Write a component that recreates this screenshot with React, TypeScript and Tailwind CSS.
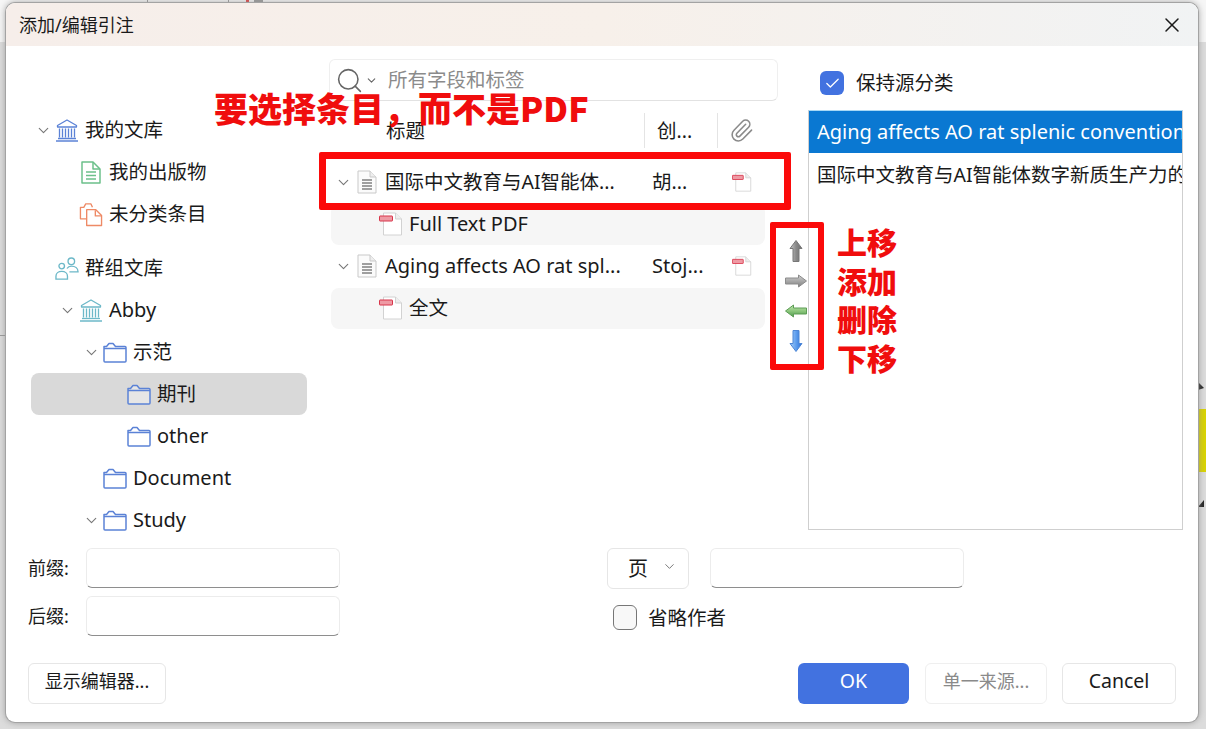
import { ChevronDown, Paperclip, Search, X, Check } from 'lucide-react';

function Caret() {
  return <ChevronDown size={17} strokeWidth={1.6} className="text-[#777]" />;
}

function Folder() {
  return (
    <svg width="24" height="21" viewBox="0 0 24 21" fill="none" stroke="#5b82d6" strokeWidth="1.5" strokeLinejoin="round">
      <path d="M1 4.5V19a1 1 0 0 0 1 1h20a1 1 0 0 0 1-1V5.5a1 1 0 0 0-1-1H12.5L10 1.5H6L3.5 4.5H1Z" fill="#fff" fillOpacity="0.35" />
      <path d="M1 6.5h22" />
    </svg>
  );
}

function Bank({ color }: { color: string }) {
  return (
    <svg width="24" height="24" viewBox="0 0 24 24" fill="none" stroke={color} strokeWidth="1.3">
      <path d="M2.5 7.5 12 2l9.5 5.5v1.5h-19V7.5Z" strokeLinejoin="round" />
      <path d="M4.5 10.5v9M7.5 10.5v9M10.5 10.5v9M13.5 10.5v9M16.5 10.5v9M19.5 10.5v9" />
      <path d="M3 20.5h18" />
      <path d="M1 23h22" strokeWidth="1.5" />
    </svg>
  );
}

function GreenDoc() {
  return (
    <svg width="20" height="23" viewBox="0 0 20 23" fill="none" stroke="#6cc08b" strokeWidth="1.5" strokeLinejoin="round">
      <path d="M1 1h11l7 7v14H1V1Z" />
      <path d="M12 1v7h7" />
      <path d="M5 11h10M5 14.5h10M5 18h10" />
    </svg>
  );
}

function Unfiled() {
  return (
    <svg width="25" height="25" viewBox="0 0 25 25" fill="none" stroke="#ee8a66" strokeWidth="1.4" strokeLinejoin="round">
      <path d="M8 17H1.5V5H5l2-3.5h5.5L14 5" />
      <path d="M8 7.5h9.5l6 6V24H8V7.5Z" fill="#fff" />
      <path d="M17 8v6h6.5" />
    </svg>
  );
}

function Group() {
  return (
    <svg width="25" height="25" viewBox="0 0 25 25" fill="none" stroke="#6cb8c8" strokeWidth="1.4">
      <circle cx="7" cy="10" r="2.9" />
      <circle cx="17" cy="5" r="3.4" />
      <path d="M1 23.5v-3c0-3 2.5-5 6-5s6 2 6 5v3H1Z" />
      <path d="M12.5 12.5c1-1.6 2.6-2.5 4.5-2.5 3.7 0 7 2 7 6h-9" />
    </svg>
  );
}

function ItemDoc() {
  return (
    <svg width="20" height="24" viewBox="0 0 20 24" fill="none" strokeLinejoin="round">
      <path d="M1 1h12l6 6v16H1V1Z" fill="#fbfbfb" stroke="#c9c9c9" />
      <path d="M13 1v6h6" fill="#eee" stroke="#c9c9c9" />
      <path d="M5 10h10M5 13h10M5 16h10M5 19h10" stroke="#444" strokeWidth="1.2" />
    </svg>
  );
}

function PdfIcon({ size = 24 }: { size?: number }) {
  return (
    <svg width={size} height={size} viewBox="0 0 24 24" fill="none">
      <path d="M4.5 1h12l6 6v16h-18V1Z" fill="#fff" stroke="#d2d2d2" />
      <path d="M16.5 1v6h6" fill="#eee" stroke="#d2d2d2" />
      <rect x="0.5" y="4" width="13" height="5" rx="0.5" fill="#ee9aa4" stroke="#d8354a" />
    </svg>
  );
}

function Arrow({ id, rotate, from, mid, to, edge }: { id: string; rotate: number; from: string; mid: string; to: string; edge: string }) {
  return (
    <svg width="24" height="24" viewBox="0 0 24 24">
      <defs>
        <linearGradient id={id} gradientUnits="userSpaceOnUse" x1="6" y1="0" x2="18" y2="0">
          <stop offset="0" stopColor={from} />
          <stop offset="0.5" stopColor={mid} />
          <stop offset="1" stopColor={to} />
        </linearGradient>
      </defs>
      <g transform={`rotate(${rotate} 12 12)`}>
        <path d="M12 1.5 18 9.5H15V22.5H9V9.5H6L12 1.5Z" fill={`url(#${id})`} stroke={edge} strokeWidth="1" strokeLinejoin="round" />
      </g>
    </svg>
  );
}

const treeRows = [
  { label: '我的文库', pad: 'pl-0', caret: true, icon: <Bank color="#5b82d6" />, gap: '' },
  { label: '我的出版物', pad: 'pl-[24px]', caret: false, icon: <GreenDoc />, gap: '' },
  { label: '未分类条目', pad: 'pl-[24px]', caret: false, icon: <Unfiled />, gap: '' },
  { label: '群组文库', pad: 'pl-0', caret: false, icon: <Group />, gap: 'mt-[12px]' },
  { label: 'Abby', pad: 'pl-[24px]', caret: true, icon: <Bank color="#6cb8c8" />, gap: '', latin: true },
  { label: '示范', pad: 'pl-[48px]', caret: true, icon: <Folder />, gap: '' },
  { label: '期刊', pad: 'pl-[72px]', caret: false, icon: <Folder />, gap: '', selected: true },
  { label: 'other', pad: 'pl-[72px]', caret: false, icon: <Folder />, gap: '', latin: true },
  { label: 'Document', pad: 'pl-[48px]', caret: false, icon: <Folder />, gap: '', latin: true },
  { label: 'Study', pad: 'pl-[48px]', caret: true, icon: <Folder />, gap: '', latin: true },
];

function TreeRow({ row }: { row: (typeof treeRows)[number] }) {
  return (
    <div className={`flex h-[42px] items-center rounded-lg ${row.pad} ${row.gap} ${row.selected ? 'bg-[#d9d9d9]' : ''}`}>
      <span className="flex w-[24px] justify-center">{row.caret && <Caret />}</span>
      <span className="flex w-[24px] justify-center">{row.icon}</span>
      <span className={`ml-[6px] whitespace-nowrap ${row.latin ? 'text-[20px]' : ''}`}>{row.label}</span>
    </div>
  );
}

function ItemRow({ title, creator, latin }: { title: string; creator: string; latin?: boolean }) {
  return (
    <div className="flex h-[42px] items-center">
      <span className="ml-[3px] flex w-[20px] justify-center"><Caret /></span>
      <span className="ml-[4px] flex w-[20px] justify-center"><ItemDoc /></span>
      <span className={`ml-[8px] w-[267px] whitespace-nowrap ${latin ? 'text-[20px]' : ''}`}>{title}</span>
      <span className={`w-[79px] whitespace-nowrap ${latin ? 'text-[20px]' : ''}`}>{creator}</span>
      <span className="flex w-[22px] justify-center"><PdfIcon size={20} /></span>
    </div>
  );
}

function AttachmentRow({ title, latin }: { title: string; latin?: boolean }) {
  return (
    <div className="flex h-[42px] items-center pl-px">
      <div className="flex h-[41px] w-full items-center rounded-lg bg-[#f6f6f6] pl-[48px]">
        <PdfIcon />
        <span className={`ml-[6px] whitespace-nowrap ${latin ? 'text-[20px]' : ''}`}>{title}</span>
      </div>
    </div>
  );
}

function Btn({ label, className }: { label: string; className: string }) {
  return (
    <div className={`flex h-[41px] items-center justify-center rounded-md border border-[#e6e6e6] bg-white pb-[5px] ${className}`}>
      {label}
    </div>
  );
}

function Field() {
  return <div className="h-[40px] w-[254px] rounded-md border border-[#ececec] border-b-[#8e8e8e] bg-white" />;
}

export default function App() {
  return (
    <div className="relative h-[729px] w-[1206px] overflow-hidden bg-[#dcdcdc] pl-[6px] pt-[3px] text-[19.5px] leading-none text-[#1a1a1a] [font-family:'Noto_Sans','Noto_Sans_CJK_SC',sans-serif]">
      {/* bits of the main window showing behind the dialog */}
      <div className="absolute left-0 top-0 h-[42px] w-full bg-[#f6f6f6]" />
      <div className="absolute left-[147px] top-0 h-[3px] w-px bg-[#999]" />
      <div className="absolute left-[228px] top-0 h-[3px] w-px bg-[#999]" />
      <div className="absolute left-[246px] top-0 h-[3px] w-[3px] bg-[#e04040]" />
      <div className="absolute left-[254px] top-0 h-[2px] w-[9px] bg-[#999]" />
      <div className="absolute left-0 top-[335px] h-px w-[6px] bg-[#999]" />
      <div className="absolute right-0 top-[409px] h-[63px] w-[7px] bg-[#d9d300]" />
      <svg className="absolute left-[1198px] top-[382px]" width="8" height="10" viewBox="0 0 8 10">
        <path d="M0 0 6 6 0 8Z" fill="#222" />
      </svg>
      <svg className="absolute left-[1198px] top-[500px]" width="8" height="10" viewBox="0 0 8 10">
        <path d="M6 0V7H0Z" fill="#222" />
      </svg>

      <div className="relative h-[719px] w-[1192px] overflow-hidden rounded-[9px] bg-white shadow-[0_0_0_1px_#a3a3a3,0_0_7px_#8f8f8f]">
        {/* title bar */}
        <div className="flex h-[43px] items-center justify-between bg-gradient-to-r from-[#f6eeea] via-[#f7f0ea] to-[#f1f3f4] pl-[13px] pr-[14px]">
          <span className="text-[18px]">添加/编辑引注</span>
          <X size={24} strokeWidth={1.5} />
        </div>

        <div className="flex h-[502px]">
          {/* library tree */}
          <div className="ml-[25px] w-[276px] pt-[63px]">
            {treeRows.map((row) => (
              <TreeRow key={row.label} row={row} />
            ))}
          </div>

          {/* item picker */}
          <div className="ml-[23px] w-[478px] pt-[13px]">
            <div className="-ml-px flex h-[42px] w-[449px] items-center rounded-md border border-[#efefef] border-b-[#e2e2e2] pl-[5px] text-[#8b8b8b]">
              <Search size={29} strokeWidth={1.3} className="text-[#666]" />
              <ChevronDown size={13} strokeWidth={2} className="ml-[1px] text-[#666]" />
              <span className="ml-[10px]">所有字段和标签</span>
            </div>
            <div className="mt-[12px] flex">
              <div className="w-[436px]">
                <div className="mb-[13px] flex h-[35px] items-center">
                  <span className="ml-[56px] w-[258px]">标题</span>
                  <span className="flex h-full w-[73px] items-center border-l border-[#e4e4e4] pl-[12px]">创...</span>
                  <span className="flex h-full items-center border-l border-[#e4e4e4] pl-[11px]">
                    <Paperclip size={25} strokeWidth={1.5} className="text-[#8a8a8a]" />
                  </span>
                </div>
                <ItemRow title="国际中文教育与AI智能体..." creator="胡..." />
                <AttachmentRow title="Full Text PDF" latin />
                <ItemRow title="Aging affects AO rat spl..." creator="Stoj..." latin />
                <AttachmentRow title="全文" />
              </div>
              <div className="ml-[19px] flex w-[24px] flex-col gap-[6px] pt-[126px]">
                <Arrow id="up" rotate={0} from="#c8c8c8" mid="#8a8a8a" to="#6f6f6f" edge="#777" />
                <Arrow id="add" rotate={90} from="#cfcfcf" mid="#a8a8a8" to="#808080" edge="#8c8c8c" />
                <Arrow id="del" rotate={-90} from="#4f9a4f" mid="#8cc77c" to="#bfe3ad" edge="#5c9d55" />
                <Arrow id="down" rotate={180} from="#2c6fd6" mid="#5f9fee" to="#a9d0f8" edge="#4d86d6" />
              </div>
            </div>
          </div>

          {/* cited items */}
          <div className="w-[375px] pt-[25px]">
            <div className="ml-[12px] flex h-[24px] items-center">
              <span className="flex h-[24px] w-[24px] items-center justify-center rounded-md bg-[#4272e0]">
                <Check size={17} strokeWidth={1.8} className="text-white" />
              </span>
              <span className="ml-[12px] whitespace-nowrap">保持源分类</span>
            </div>
            <div className="mt-[15px] h-[420px] overflow-hidden border border-[#cfcfcf] border-t-[#a8d8f5]">
              <div className="flex h-[42px] items-center whitespace-nowrap bg-[#0a78d2] pl-[8px] text-[20px] text-white">
                Aging affects AO rat splenic conventional dendritic cells
              </div>
              <div className="flex h-[43px] items-center whitespace-nowrap pl-[8px]">
                国际中文教育与AI智能体数字新质生产力的融合发展
              </div>
            </div>
          </div>
        </div>

        {/* citation options */}
        <div className="flex pl-[22px]">
          <div className="flex flex-col gap-[8px]">
            <div className="flex items-center">
              <span className="w-[58px] text-[18px]">前缀:</span>
              <Field />
            </div>
            <div className="flex items-center">
              <span className="w-[58px] text-[18px]">后缀:</span>
              <Field />
            </div>
          </div>
          <div className="ml-[267px] flex flex-col">
            <div className="flex items-start">
              <div className="flex h-[41px] w-[82px] items-center rounded-md border border-[#e6e6e6] pl-[20px]">
                <span className="text-[20px]">页</span>
                <ChevronDown size={15} strokeWidth={1.4} className="ml-[14px] -translate-y-[2px] text-[#666]" />
              </div>
              <div className="ml-[21px]"><Field /></div>
            </div>
            <div className="mt-[16px] flex items-center pl-[6px]">
              <span className="h-[25px] w-[24px] rounded-md border border-[#777] bg-[#f8f8f8]" />
              <span className="ml-[11px]">省略作者</span>
            </div>
          </div>
        </div>

        <div className="mt-[27px] flex items-center justify-between pl-[22px] pr-[22px]">
          <Btn label="显示编辑器..." className="w-[138px] text-[18px]" />
          <div className="flex">
            <div className="flex h-[41px] w-[111px] items-center justify-center rounded-md bg-[#4272e0] pb-[5px] text-white">OK</div>
            <Btn label="单一来源..." className="ml-[16px] w-[122px] border-[#efefef] text-[18px] text-[#8a8a8a]" />
            <Btn label="Cancel" className="ml-[15px] w-[114px]" />
          </div>
        </div>
      </div>

      {/* red annotations painted over the screenshot */}
      <div className="absolute left-[214px] top-[88px] whitespace-nowrap text-[34px] font-black leading-[40px] text-[#f00d0d] [font-family:'Noto_Sans_CJK_SC',sans-serif]">
        要选择条目，而不是PDF
      </div>
      <div className="absolute left-[319px] top-[152px] h-[58px] w-[472px] rounded-[2px] border-[7px] border-[#fb0a0a]" />
      <div className="absolute left-[770px] top-[222px] h-[148px] w-[54px] rounded-[2px] border-[6px] border-[#fb0a0a]" />
      <div className="absolute left-[837px] top-[222px] flex flex-col whitespace-nowrap text-[30px] font-black leading-[38.6px] text-[#f00d0d] [font-family:'Noto_Sans_CJK_SC',sans-serif]">
        <span>上移</span>
        <span>添加</span>
        <span>删除</span>
        <span>下移</span>
      </div>
    </div>
  );
}
